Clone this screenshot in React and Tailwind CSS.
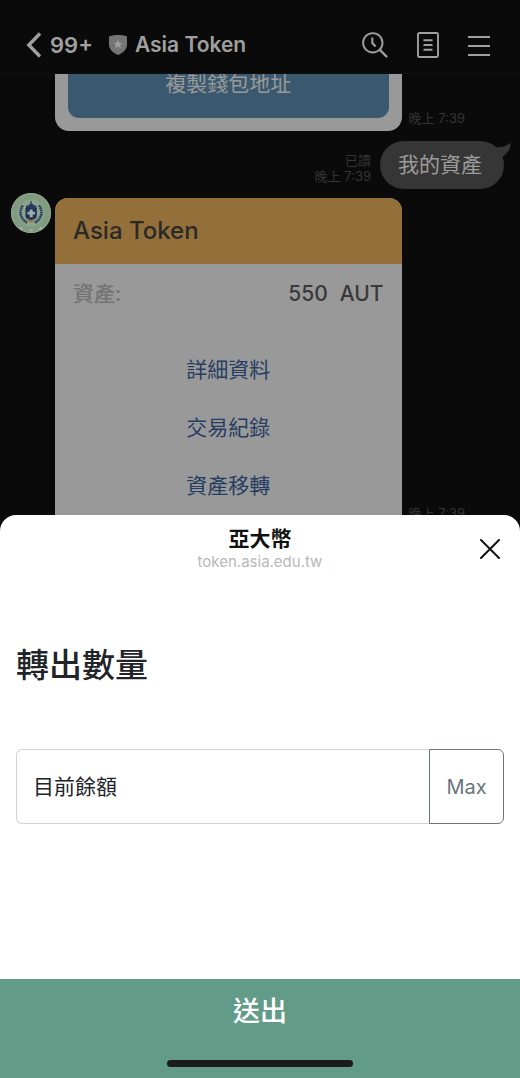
import React from "react";

function BackIcon() {
  return (
    <svg viewBox="0 0 16 26" className="h-[26px] w-4" fill="none" stroke="currentColor" strokeWidth="3.4" aria-hidden="true">
      <path d="M14 1.5 2.8 13 14 24.5" />
    </svg>
  );
}

function ShieldIcon() {
  return (
    <svg viewBox="0 0 18 20" className="h-5 w-[18px]" aria-hidden="true">
      <path d="M9 0C12 0 15.5.5 17.2 1c.5.2.8.5.8 1v7.5c0 5-4.5 8.7-9 10.5C4.500 18.200 0 14.500 0 9.500V2c0-.5.3-.8.8-1C2.500.5 6 0 9 0Z" fill="#757575" />
      <path d="m9 4.800 1.300 2.900 3.200.3-2.400 2.100.7 3.100L9 11.600l-2.800 1.600.7-3.100L4.500 8l3.200-.3Z" fill="#a0a0a0" />
    </svg>
  );
}

function SearchIcon() {
  return (
    <svg viewBox="0 0 26 26" className="size-[26px]" fill="none" stroke="currentColor" strokeWidth="1.9" aria-hidden="true">
      <circle cx="10.800" cy="10.800" r="9.700" />
      <path d="m17.600 17.600 7.500 7.500" strokeWidth="2.200" />
      <path d="M10.300 5.500v5.600l3.300 3.300" strokeWidth="2.100" />
    </svg>
  );
}

function NoteIcon() {
  return (
    <svg viewBox="0 0 22 26" className="h-[26px] w-[22px]" fill="none" stroke="currentColor" strokeWidth="1.900" aria-hidden="true">
      <rect x="1" y="1" width="20" height="24" rx="1.500" />
      <path d="M6.500 8.300h9M6.500 13h9M6.500 17.700h9" />
    </svg>
  );
}

function MenuIcon() {
  return (
    <svg viewBox="0 0 22 22" className="size-[22px]" fill="none" stroke="currentColor" strokeWidth="2" aria-hidden="true">
      <path d="M0 3h22M0 12h22M0 21h22" />
    </svg>
  );
}

function CloseIcon() {
  return (
    <svg viewBox="0 0 20 20" className="size-5" fill="none" stroke="currentColor" strokeWidth="2" strokeLinecap="round" aria-hidden="true">
      <path d="m1 1 18 18M19 1 1 19" />
    </svg>
  );
}

function Avatar() {
  return (
    <svg viewBox="0 0 40 40" className="size-10 shrink-0" role="img" aria-label="Asia Token">
      <circle cx="20" cy="20" r="20" fill="#7f9c80" />
      <circle cx="20" cy="20" r="19.500" fill="none" stroke="#91a391" strokeWidth="1" />
      <circle cx="20" cy="20" r="13.500" fill="#8ba28c" />
      <g fill="none" stroke="#26395a" strokeWidth="2.600" strokeDasharray="1.700 .6">
        <path d="M12 12.500C8 17 8.500 25.500 16 29.500" />
        <path d="M28 12.500c4 4.500 3.500 13-4 17" />
      </g>
      <path d="M19.500 8h1.200v3h1.600v1.500h3V15H15v-2.500h3V11h1.500Z" fill="#26395a" />
      <path d="M14.500 15h11.300v7c0 3.500-3 5.800-5.700 7-2.700-1.200-5.600-3.500-5.600-7Z" fill="#1e3157" />
      <path d="M18.700 16.500h3v2.200H24v2.800h-2.300v2.800h-3v-2.800h-2.300v-2.800h2.300Z" fill="#9db0aa" />
      <path d="m15.500 25 4.700 2.200 4.600-2.200-2 3.200-2.600 1.500-2.700-1.500Z" fill="#a87a42" />
      <path d="m9.500 34 1.800 2.500M19 37h2.500M28.500 36.500l2-2" stroke="#a8b5a6" strokeWidth="2" />
    </svg>
  );
}

function ChatHeader() {
  return (
    <header className="relative flex h-[74px] items-center border-b border-[#111111] bg-[#0a0a0a] pt-4 pr-[30px] pl-[26px] text-[#a0a0a0]">
      <button type="button" aria-label="返回, 99+" className="flex items-center gap-2 text-[22px] leading-7 font-semibold">
        <BackIcon />
        99+
      </button>
      <div className="ml-4 flex items-center gap-2">
        <ShieldIcon />
        <h1 className="text-[21px] leading-7 font-semibold">Asia Token</h1>
      </div>
      <nav className="ml-auto flex items-center gap-[29px]">
        <button type="button" aria-label="搜尋"><SearchIcon /></button>
        <button type="button" aria-label="記事本"><NoteIcon /></button>
        <button type="button" aria-label="選單"><MenuIcon /></button>
      </nav>
    </header>
  );
}

function Time({ children }) {
  return <time className="block text-[13px] leading-4 text-[#353535]">{children}</time>;
}

const actions = ["詳細資料", "交易紀錄", "資產移轉"];

function ChatHistory() {
  return (
    <main className="overflow-hidden">
      <div className="-mt-6 flex items-end pr-[55px] pl-[55px]">
        <div className="min-w-0 flex-1 rounded-b-[14px] bg-[#999999] px-[13px] pb-[13px]">
          <button type="button" className="h-[68px] w-full rounded-[11px] bg-[#3b596e] text-[21px] leading-5 text-[#999999]">
            複製錢包地址
          </button>
        </div>
        <div className="ml-[7px] pb-[5px]"><Time>晚上 7:39</Time></div>
      </div>

      <div className="mt-[10px] flex justify-end pr-4">
        <div className="mt-[11px] mr-[9px] text-right">
          <p className="text-[13px] leading-4 text-[#353535]">已讀</p>
          <Time>晚上 7:39</Time>
        </div>
        <div className="relative rounded-full bg-[#363636] py-[10px] pr-[22px] pl-[18px] text-[21px] leading-7 text-[#9c9c9c]">
          我的資產
          <svg viewBox="0 0 24 18" className="absolute -top-px -right-[7px] h-[18px] w-6" aria-hidden="true">
            <path d="M7 7c6 1 13-.5 16.500-4.500C24 8 21 14 15 17Z" fill="#363636" />
          </svg>
        </div>
      </div>

      <div className="mt-[4px] flex items-start pr-[55px] pl-[11px]">
        <Avatar />
        <article className="mt-[5px] ml-1 min-w-0 flex-1 overflow-hidden rounded-t-[13px] bg-[#999999]">
          <h2 className="bg-[#93703a] px-[18px] py-[17px] text-[24px] leading-8 font-medium text-[#2b2927]">Asia Token</h2>
          <div className="flex items-center justify-between px-[18px] pt-4 text-[21px] leading-7 font-medium">
            <span className="text-[#747474]">資產:</span>
            <span className="flex gap-3 text-[#393939]"><span>550</span><span>AUT</span></span>
          </div>
          <div className="flex flex-col items-center pt-[33px] text-[21px] text-[#263d63]">
            {actions.map((label) => (
              <button key={label} type="button" className="h-[58px] w-full">{label}</button>
            ))}
          </div>
        </article>
        <div className="-mb-[6px] ml-[7px] self-end"><Time>晚上 7:39</Time></div>
      </div>
    </main>
  );
}

function TransferSheet() {
  return (
    <section role="dialog" aria-label="亞大幣" className="relative flex flex-1 flex-col overflow-hidden rounded-t-[16px] bg-white">
      <header className="relative pt-[10px] text-center">
        <h2 className="text-[21px] leading-7 font-bold text-[#111111]">亞大幣</h2>
        <p className="text-[15px] leading-[18px] text-[#b8b8b8]">token.asia.edu.tw</p>
        <button type="button" aria-label="關閉" className="absolute top-6 right-5 text-[#111111]"><CloseIcon /></button>
      </header>
      <form className="flex flex-1 flex-col" onSubmit={(event) => event.preventDefault()}>
        <div className="flex-1 px-4 pt-[74px] pb-10">
          <label htmlFor="amount" className="block text-[33px] leading-10 font-medium text-[#212529]">轉出數量</label>
          <div className="mt-[64px] flex h-[75px]">
            <input
              id="amount"
              type="text"
              inputMode="decimal"
              placeholder="目前餘額"
              className="min-w-0 flex-1 rounded-l-[6px] border border-r-0 border-[#ced4da] px-4 text-[21px] text-[#212529] placeholder:text-[#212529] placeholder:opacity-100"
            />
            <button type="button" className="w-[75px] rounded-r-[6px] border border-[#6c757d] text-[20px] text-[#6c757d]">Max</button>
          </div>
        </div>
        <button type="submit" className="flex flex-col items-center bg-[#629c89] pt-[17px] pb-[11px] text-[27px] leading-8 font-medium text-white">
          送出
          <span className="mt-8 h-[7px] w-[186px] rounded-full bg-[#1b1b1b]" />
        </button>
      </form>
    </section>
  );
}

export default function App() {
  return (
    <div className="flex min-h-screen flex-col bg-[#0a0a0a] font-[Inter,'Noto_Sans_CJK_TC',sans-serif]">
      <ChatHeader />
      <ChatHistory />
      <TransferSheet />
    </div>
  );
}
